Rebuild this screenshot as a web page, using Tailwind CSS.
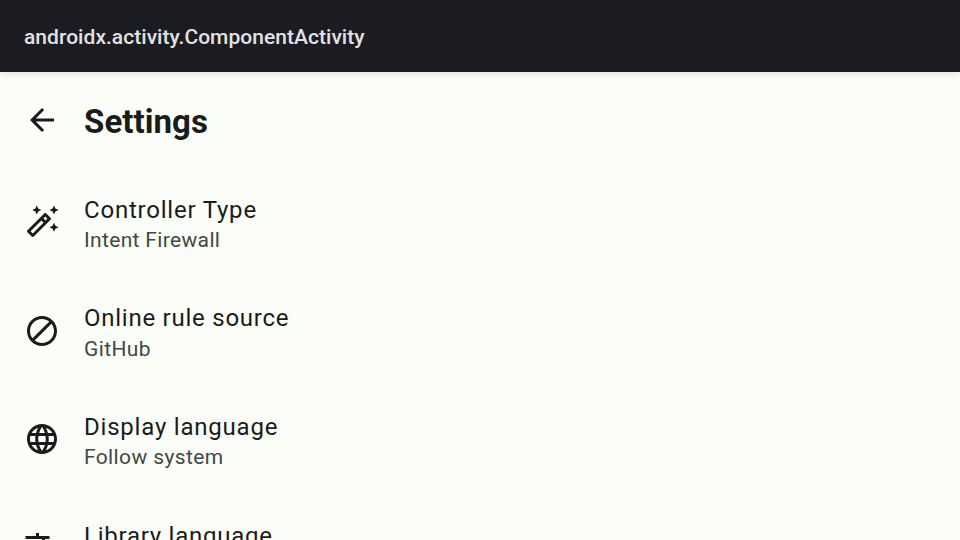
<!DOCTYPE html>
<html lang="en"><head><meta charset="utf-8"><title>Settings</title>
<script src="https://cdn.jsdelivr.net/npm/@tailwindcss/browser@4"></script></head>
<body class="flex h-[540px] w-[960px] flex-col overflow-hidden bg-[#fbfdf8] font-['Roboto',sans-serif] text-[#191c1a]">
<div class="flex h-[72px] shrink-0 items-center bg-[#1b1c21] px-6 pt-0.5 shadow-[0_2px_6px_rgba(0,0,0,0.11)]"><span class="text-[21px] leading-6 font-medium tracking-[0.04px] text-[#e2e2e2]">androidx.activity.ComponentActivity</span></div>
<header class="flex h-24 shrink-0 items-center px-6">
<svg class="size-9" viewBox="0 0 24 24" fill="currentColor"><path d="M20 11H7.830l5.590-5.590L12 4l-8 8 8 8 1.410-1.410L7.830 13H20v-2z"/></svg>
<h1 class="ml-6 pt-1 text-[33px] leading-[42px] font-bold tracking-[0.06px]">Settings</h1>
</header>
<main class="min-h-0 flex-1 overflow-hidden">
<section class="flex h-[108.5px] items-center px-6">
<svg class="size-9" viewBox="0 0 24 24" fill="currentColor"><path d="M20 7l.94-2.060L23 4l-2.060-.94L20 1l-.94 2.060L17 4l2.060.94zM8.500 7l.94-2.060L11.500 4l-2.060-.94L8.500 1l-.94 2.060L5.500 4l2.060.94zM20 12.500l-.94 2.060-2.060.94 2.060.94.94 2.060.94-2.060L23 15.500l-2.060-.94zM17.710 9.120l-2.830-2.830c-.19-.19-.45-.29-.71-.29s-.51.1-.71.29L2.290 17.460c-.39.39-.39 1.020 0 1.410l2.830 2.830c.2.2.45.3.71.3s.51-.1.71-.29L17.710 10.530c.39-.39.39-1.020 0-1.410zm-3.540-.71l1.420 1.420-1.170 1.170L13 9.580l1.170-1.170zM5.830 19.590l-1.420-1.420L11.590 11l1.420 1.420-7.180 7.170z"/></svg>
<div class="ml-6"><p class="text-2xl leading-9 tracking-[0.79px]">Controller Type</p><p class="text-[21px] leading-[25px] tracking-[0.34px] text-[#404943]">Intent Firewall</p></div>
</section>
<section class="flex h-[108.5px] items-center px-6">
<svg class="size-9" viewBox="0 0 24 24" fill="currentColor"><path d="M12 2C6.480 2 2 6.480 2 12s4.480 10 10 10 10-4.480 10-10S17.520 2 12 2zM4 12c0-4.420 3.580-8 8-8 1.850 0 3.550.63 4.900 1.690L5.690 16.900C4.630 15.550 4 13.850 4 12zm8 8c-1.850 0-3.550-.63-4.900-1.690L18.310 7.100C19.370 8.450 20 10.150 20 12c0 4.420-3.580 8-8 8z"/></svg>
<div class="ml-6 pt-px"><p class="text-2xl leading-9 tracking-[0.75px]">Online rule source</p><p class="text-[21px] leading-[26px] tracking-[0.375px] text-[#404943]">GitHub</p></div>
</section>
<section class="flex h-[108.5px] items-center px-6">
<svg class="size-9" viewBox="0 0 24 24" fill="currentColor"><path d="M11.990 2C6.470 2 2 6.480 2 12s4.470 10 9.990 10C17.520 22 22 17.520 22 12S17.520 2 11.990 2zm6.930 6h-2.950c-.32-1.250-.78-2.450-1.380-3.560 1.840.63 3.370 1.910 4.330 3.560zM12 4.040c.83 1.200 1.480 2.530 1.910 3.960h-3.820c.43-1.430 1.080-2.760 1.910-3.960zM4.260 14C4.100 13.360 4 12.690 4 12s.1-1.360.26-2h3.380c-.08.66-.14 1.320-.14 2s.06 1.340.14 2H4.260zm.82 2h2.950c.32 1.250.78 2.450 1.380 3.560-1.840-.63-3.370-1.900-4.330-3.560zm2.950-8H5.080c.96-1.660 2.490-2.930 4.330-3.560C8.810 5.550 8.350 6.750 8.030 8zM12 19.960c-.83-1.200-1.480-2.530-1.910-3.960h3.820c-.43 1.430-1.080 2.760-1.910 3.960zM14.340 14H9.660c-.09-.66-.16-1.320-.16-2s.07-1.350.16-2h4.680c.09.65.16 1.320.16 2s-.07 1.340-.16 2zm.25 5.560c.6-1.110 1.060-2.310 1.380-3.560h2.950c-.96 1.650-2.490 2.930-4.330 3.560zM16.360 14c.08-.66.14-1.320.14-2s-.06-1.340-.14-2h3.380c.16.64.26 1.310.26 2s-.1 1.360-.26 2h-3.380z"/></svg>
<div class="ml-6"><p class="text-2xl leading-9 tracking-[0.79px]">Display language</p><p class="text-[21px] leading-[25px] tracking-[0.375px] text-[#404943]">Follow system</p></div>
</section>
<section class="flex items-start px-6 pt-6">
<svg class="mt-3 size-9" viewBox="0 0 24 24" fill="currentColor"><path d="M12.870 15.070l-2.540-2.510.03-.03c1.740-1.940 2.980-4.170 3.710-6.530H17V4h-7V2H8v2H1v1.990h11.170C11.500 7.920 10.440 9.750 9 11.350 8.070 10.320 7.300 9.190 6.690 8h-2c.73 1.630 1.730 3.170 2.980 4.560l-5.090 5.020L4 19l5-5 3.110 3.110.76-2.040zM18.500 10h-2L12 22h2l1.120-3h4.750L21 22h2l-4.500-12zm-2.620 7l1.620-4.330L19.120 17h-3.240z"/></svg>
<p class="ml-6 text-2xl leading-9 tracking-[0.75px]">Library language</p>
</section>
</main></body></html>
